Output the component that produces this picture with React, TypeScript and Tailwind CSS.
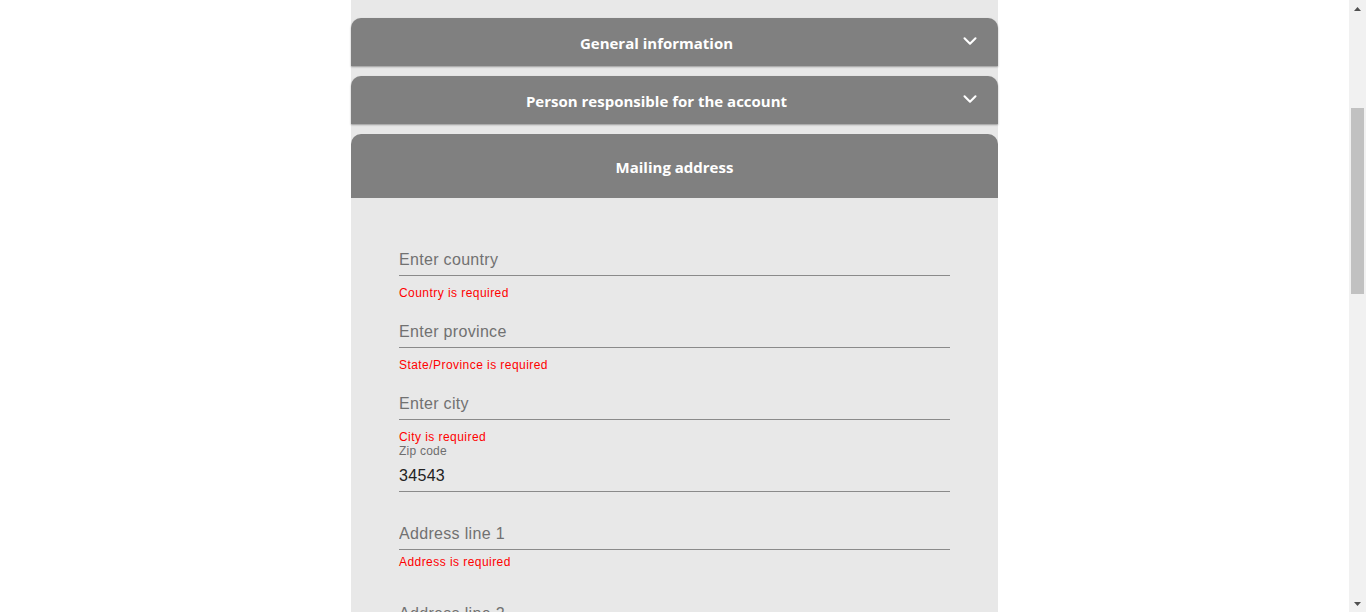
import { ChevronDown } from 'lucide-react';

interface FieldProps {
  placeholder?: string;
  label?: string;
  value?: string;
  error?: string;
  className?: string;
  errorClass?: string;
}

function Field({ placeholder, label, value, error, className = '', errorClass = 'mt-[10px]' }: FieldProps) {
  return (
    <div className={className}>
      {label && (
        <div className="text-[12px] leading-[14px] text-[#6e6e6e] tracking-[0.02em] mb-[4px]">{label}</div>
      )}
      <input
        type="text"
        placeholder={placeholder}
        defaultValue={value}
        className="block w-full h-[30px] bg-transparent border-b border-[#8a8a8a] text-[16px] tracking-[0.02em] text-[#222222] placeholder:text-[#717171] outline-none pb-[1px]"
      />
      {error && (
        <div className={`text-[12px] leading-[14px] text-[#ff0000] tracking-[0.037em] ${errorClass}`}>
          {error}
        </div>
      )}
    </div>
  );
}

function SectionHeader({ title, collapsed }: { title: string; collapsed?: boolean }) {
  if (!collapsed) {
    return (
      <div className="h-16 flex items-center justify-center pt-[2px] bg-[#808080] rounded-t-[10px] text-white font-bold text-[15px] font-['Open_Sans',sans-serif]">
        {title}
      </div>
    );
  }
  return (
    <div className="h-12 flex items-center px-[10px] bg-[#808080] rounded-t-[10px] shadow-[0_1px_2px_rgba(0,0,0,0.35)] text-white font-bold text-[15px] font-['Open_Sans',sans-serif] cursor-pointer">
      <span className="flex-1 text-center pt-[2px]">{title}</span>
      <span className="w-9 flex justify-center -mt-[3px]">
        <ChevronDown size={22} strokeWidth={2.25} />
      </span>
    </div>
  );
}

function Scrollbar() {
  return (
    <div className="w-[17px] h-screen bg-[#f1f1f1] flex flex-col items-center shrink-0">
      <div className="h-[17px] flex items-center justify-center">
        <svg width="7" height="4" viewBox="0 0 7 4"><path d="M3.5 0L7 4H0z" fill="#505050" /></svg>
      </div>
      <div className="flex-1 w-full px-[2px] pt-[91px]">
        <div className="h-[186px] bg-[#c1c1c1]" />
      </div>
      <div className="h-[17px] flex items-center justify-center">
        <svg width="7" height="4" viewBox="0 0 7 4"><path d="M0 0H7L3.5 4z" fill="#505050" /></svg>
      </div>
    </div>
  );
}

export default function App() {
  return (
    <div className="h-screen flex overflow-hidden bg-white font-['Liberation_Sans',Arial,sans-serif]">
      <div className="flex-1 overflow-hidden">
        <div className="w-[647px] mx-auto bg-[#e8e8e8] pt-[18px] pb-12">
          <div className="flex flex-col gap-[10px]">
            <SectionHeader title="General information" collapsed />
            <SectionHeader title="Person responsible for the account" collapsed />
            <div>
              <SectionHeader title="Mailing address" />
              <div className="px-12 pt-12">
                <Field placeholder="Enter country" error="Country is required" className="mb-[18px]" />
                <Field placeholder="Enter province" error="State/Province is required" className="mb-[18px]" />
                <Field placeholder="Enter city" error="City is required" />
                <Field label="Zip code" value="34543" className="mb-[28px]" />
                <Field placeholder="Address line 1" error="Address is required" errorClass="mt-[5px]" className="mb-[31px]" />
                <Field placeholder="Address line 2" className="mb-[28px]" />
                <Field placeholder="Postal box" className="mb-[28px]" />
              </div>
            </div>
          </div>
        </div>
      </div>
      <Scrollbar />
    </div>
  );
}
